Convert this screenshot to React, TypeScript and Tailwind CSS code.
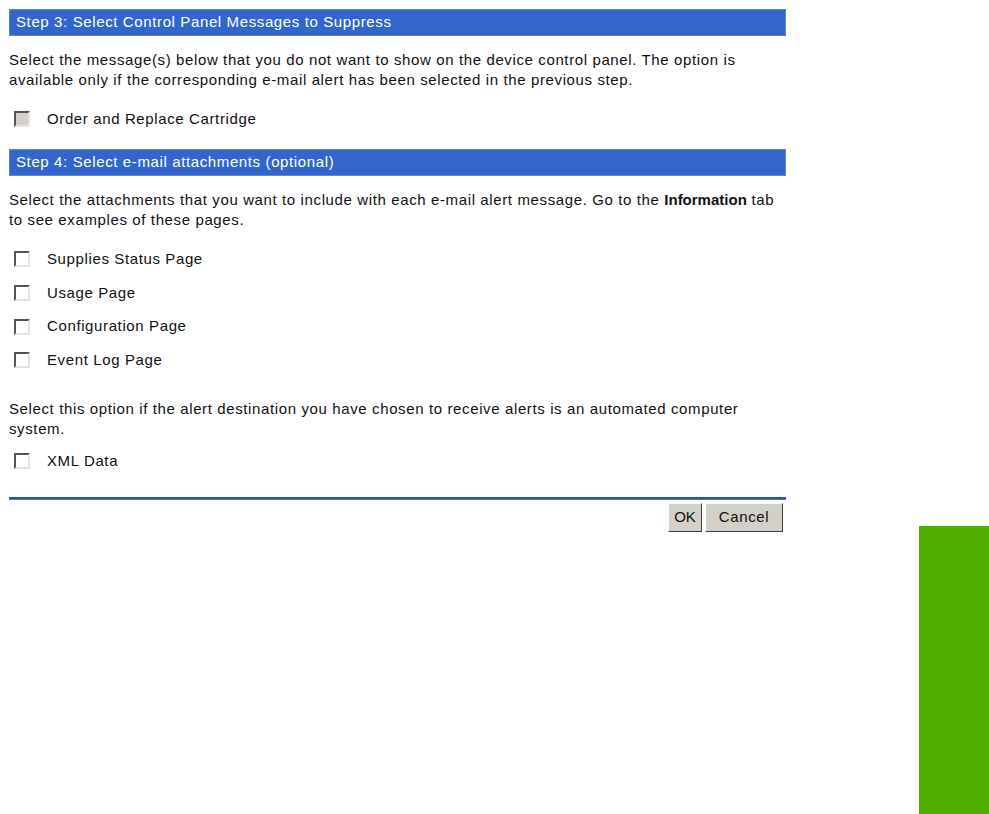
const font = { fontFamily: '"Liberation Sans", Arial, sans-serif' };

function Box({ disabled }: { disabled?: boolean }) {
  return (
    <span
      className={
        'inline-block w-4 h-4 shrink-0 border-2 border-t-[#555555] border-l-[#555555] border-b-[#e4e4e4] border-r-[#e4e4e4] ' +
        (disabled ? 'bg-[#d4d0c8]' : 'bg-white')
      }
    />
  );
}

function Option({ label, disabled }: { label: string; disabled?: boolean }) {
  return (
    <div className="flex items-center h-[33.6px] pl-[5px]">
      <Box disabled={disabled} />
      <span className="ml-[17px]">{label}</span>
    </div>
  );
}

function Bar({ children }: { children: React.ReactNode }) {
  return (
    <div className="bg-[#3366cc] text-white h-[27px] flex items-center px-[6px] border border-[#5c86d8]">
      {children}
    </div>
  );
}

export default function App() {
  return (
    <div className="relative w-[989px] h-[814px] bg-white text-[15px] tracking-[0.62px] text-[#111111]" style={font}>
      <div className="w-[777px] ml-[9px] pt-[9px]">
        <Bar>Step 3: Select Control Panel Messages to Suppress</Bar>
        <p className="mt-[14px] leading-5 pr-[30px]">
          Select the message(s) below that you do not want to show on the device control panel. The option is available only if the corresponding e-mail alert has been selected in the previous step.
        </p>
        <div className="mt-[12px]">
          <Option label="Order and Replace Cartridge" disabled />
        </div>
        <div className="mt-[13px]">
          <Bar>Step 4: Select e-mail attachments (optional)</Bar>
        </div>
        <p className="mt-[14px] leading-5 pr-[4px]">
          Select the attachments that you want to include with each e-mail alert message. Go to the <b className="tracking-normal">Information</b> tab to see examples of these pages.
        </p>
        <div className="mt-[13px]">
          <Option label="Supplies Status Page" />
          <Option label="Usage Page" />
          <Option label="Configuration Page" />
          <Option label="Event Log Page" />
        </div>
        <p className="mt-[22px] leading-5 pr-[30px]">
          Select this option if the alert destination you have chosen to receive alerts is an automated computer system.
        </p>
        <div className="mt-[5px]">
          <Option label="XML Data" />
        </div>
        <div className="mt-[19px] h-[3px] bg-[#2a56a6] border-b border-[#4a7ad0]" />
        <div className="flex justify-end gap-[3px] mt-[3px] pr-[3px]">
          <button className="h-[29px] w-[34px] tracking-normal bg-[#d4d0c8] border border-t-white border-l-white border-b-[#404040] border-r-[#404040]">
            OK
          </button>
          <button className="h-[29px] w-[78px] bg-[#d4d0c8] border border-t-white border-l-white border-b-[#404040] border-r-[#404040]">
            Cancel
          </button>
        </div>
      </div>
      <div className="absolute left-[919px] top-[526px] w-[70px] h-[288px] bg-[#4eae00]" />
    </div>
  );
}
